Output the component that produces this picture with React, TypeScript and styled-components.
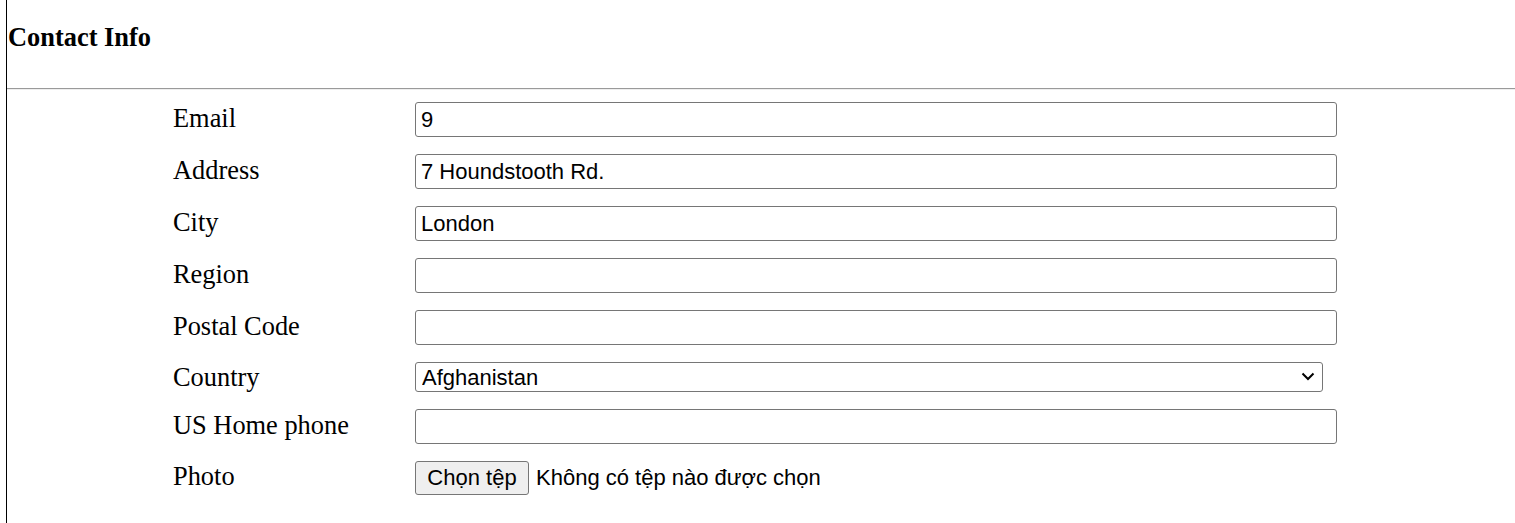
import React from "react";
import styled, { createGlobalStyle } from "styled-components";

const Global = createGlobalStyle`
  html, body { margin: 0; padding: 0; background: #fff; }
  * { box-sizing: border-box; }
`;

const Page = styled.div`
  margin-left: 6px;
  border-left: 1px solid #000;
  min-height: 100vh;
`;

const Header = styled.div`
  height: 88px;
  padding: 22px 0 0 1px;
`;

const Title = styled.h3`
  margin: 0;
  font-family: "Liberation Serif", "Times New Roman", serif;
  font-weight: bold;
  font-size: 26.4px;
  line-height: 30px;
  color: #000;
`;

const Rule = styled.hr`
  margin: 0;
  border: 0;
  border-top: 1px solid #9a9a9a;
  border-bottom: 1px solid #eeeeee;
  height: 0;
`;

const Form = styled.form`
  display: grid;
  grid-template-columns: 242px 922px;
  row-gap: 17px;
  align-items: baseline;
  padding: 12px 0 0 166px;
`;

const Label = styled.label<{ $center?: boolean }>`
  font-family: "Liberation Serif", "Times New Roman", serif;
  font-size: 26.4px;
  line-height: 30px;
  color: #000;
  align-self: ${(p) => (p.$center ? "center" : "baseline")};
`;

const TextInput = styled.input`
  width: 922px;
  height: 35px;
  border: 1px solid #767676;
  border-radius: 3px;
  padding: 0 5px;
  font-family: "Liberation Sans", Arial, sans-serif;
  font-size: 22px;
  color: #000;
  background: #fff;
  outline: none;
`;

const SelectWrap = styled.div`
  position: relative;
  width: 908px;
  height: 30px;
  align-self: center;
`;

const Select = styled.select`
  appearance: none;
  width: 100%;
  height: 30px;
  border: 1px solid #767676;
  border-radius: 3px;
  padding: 0 30px 0 6px;
  font-family: "Liberation Sans", Arial, sans-serif;
  font-size: 22px;
  color: #000;
  background: #fff;
  outline: none;
`;

const Chevron = styled.svg`
  position: absolute;
  right: 8px;
  top: 10px;
  width: 14px;
  height: 9px;
  pointer-events: none;
`;

const FileRow = styled.div`
  display: flex;
  align-items: center;
  gap: 7px;
`;

const FileButton = styled.button`
  height: 34px;
  width: 114px;
  border: 1px solid #767676;
  border-radius: 3px;
  background: #efefef;
  font-family: "Liberation Sans", Arial, sans-serif;
  font-size: 22px;
  color: #000;
  padding: 0;
`;

const FileText = styled.span`
  font-family: "Liberation Sans", Arial, sans-serif;
  font-size: 22px;
  color: #000;
`;

const fields: { label: string; value: string }[] = [
  { label: "Email", value: "9" },
  { label: "Address", value: "7 Houndstooth Rd." },
  { label: "City", value: "London" },
  { label: "Region", value: "" },
  { label: "Postal Code", value: "" },
];

export default function App() {
  return (
    <>
      <Global />
      <Page>
        <Header>
          <Title>Contact Info</Title>
        </Header>
        <Rule />
        <Form onSubmit={(e) => e.preventDefault()}>
          {fields.map((f) => (
            <React.Fragment key={f.label}>
              <Label>{f.label}</Label>
              <TextInput defaultValue={f.value} />
            </React.Fragment>
          ))}
          <Label $center>Country</Label>
          <SelectWrap>
            <Select defaultValue="Afghanistan">
              <option>Afghanistan</option>
              <option>Albania</option>
              <option>Algeria</option>
            </Select>
            <Chevron viewBox="0 0 14 9">
              <path d="M1.5 1.5 L7 7 L12.5 1.5" fill="none" stroke="#000" strokeWidth="2" />
            </Chevron>
          </SelectWrap>
          <Label>US Home phone</Label>
          <TextInput defaultValue="" />
          <Label>Photo</Label>
          <FileRow>
            <FileButton type="button">Chọn tệp</FileButton>
            <FileText>Không có tệp nào được chọn</FileText>
          </FileRow>
        </Form>
      </Page>
    </>
  );
}
